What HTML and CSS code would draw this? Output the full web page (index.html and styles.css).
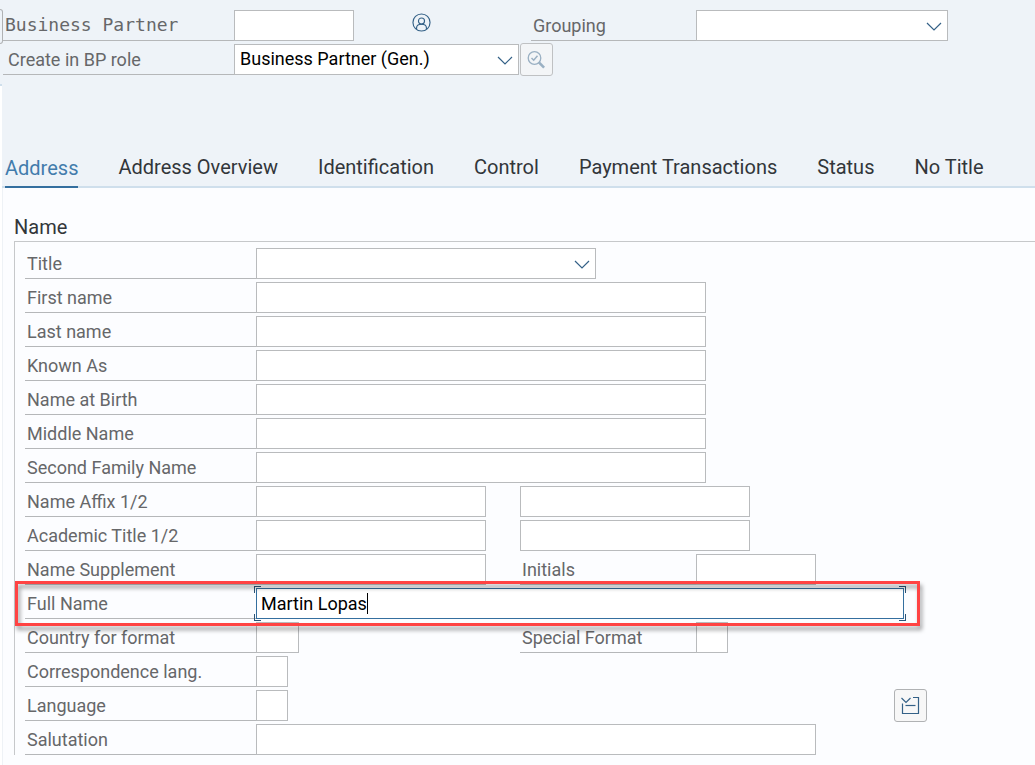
FILE: index.html
```html
<!DOCTYPE html>
<html lang="en">
<head>
<meta charset="utf-8">
<title>Business Partner</title>
<link rel="stylesheet" href="styles.css">
</head>
<body>
<svg class="defs" aria-hidden="true">
  <symbol id="chevron" viewBox="0 0 16 9"><path d="M1 1 L8 8 L15 1" fill="none" stroke="currentColor" stroke-width="1.2"/></symbol>
</svg>

<header class="header">
  <div class="header-row">
    <label class="label code-label" for="partner">Business Partner</label>
    <div class="cell partner-cell">
      <input class="field w-120" id="partner" type="text">
      <svg class="person" viewBox="0 0 20 20" fill="none" stroke="currentColor" stroke-width="1.2" role="img" aria-label="Person">
        <circle cx="10" cy="10" r="9"/>
        <circle cx="10" cy="8.5" r="3.2"/>
        <path d="M4.8 16.8 V15.9 C4.8 13.2 7 11.8 10 11.8 S15.2 13.2 15.2 15.9 V16.8"/>
      </svg>
    </div>
    <label class="label grouping-label" for="grouping">Grouping</label>
    <div class="select w-252">
      <select class="field" id="grouping"><option></option></select>
      <svg class="chevron"><use href="#chevron"/></svg>
    </div>
  </div>
  <div class="header-row">
    <label class="label role-label" for="role">Create in BP role</label>
    <div class="cell role-cell">
      <div class="select w-285">
        <select class="field" id="role"><option>Business Partner (Gen.)</option></select>
        <svg class="chevron"><use href="#chevron"/></svg>
      </div>
      <button class="icon-button muted" type="button" aria-label="Role details">
        <svg viewBox="0 0 20 20" width="20" height="20" fill="none" stroke="currentColor">
          <circle cx="7.5" cy="8" r="6.3" stroke-width="1.3"/>
          <path d="M4.5 8 L6.7 10.2 L10.5 5.8" stroke-width="1.5"/>
          <path d="M11.9 12.4 L17.1 17.6" stroke-width="2.6"/>
        </svg>
      </button>
    </div>
  </div>
</header>

<main class="main">
  <nav class="tabs">
    <a class="tab active" href="#address">Address</a>
    <a class="tab" href="#overview">Address Overview</a>
    <a class="tab" href="#identification">Identification</a>
    <a class="tab" href="#control">Control</a>
    <a class="tab" href="#payment">Payment Transactions</a>
    <a class="tab" href="#status">Status</a>
    <a class="tab" href="#notitle">No Title</a>
  </nav>

  <section class="panel" id="address">
    <h2 class="group-title">Name</h2>
    <form class="group">
      <div class="row">
        <label class="label" for="title">Title</label>
        <div class="select w-340 span">
          <select class="field" id="title"><option></option></select>
          <svg class="chevron"><use href="#chevron"/></svg>
        </div>
      </div>
      <div class="row"><label class="label" for="first">First name</label><input class="field w-450 span" id="first" type="text"></div>
      <div class="row"><label class="label" for="last">Last name</label><input class="field w-450 span" id="last" type="text"></div>
      <div class="row"><label class="label" for="known">Known As</label><input class="field w-450 span" id="known" type="text"></div>
      <div class="row"><label class="label" for="birth">Name at Birth</label><input class="field w-450 span" id="birth" type="text"></div>
      <div class="row"><label class="label" for="middle">Middle Name</label><input class="field w-450 span" id="middle" type="text"></div>
      <div class="row"><label class="label" for="second">Second Family Name</label><input class="field w-450 span" id="second" type="text"></div>
      <div class="row"><label class="label" for="affix">Name Affix 1/2</label><input class="field w-230" id="affix" type="text"><input class="field w-230 pair" type="text" aria-label="Name Affix 2"></div>
      <div class="row"><label class="label" for="academic">Academic Title 1/2</label><input class="field w-230" id="academic" type="text"><input class="field w-230 pair" type="text" aria-label="Academic Title 2"></div>
      <div class="row"><label class="label" for="supplement">Name Supplement</label><input class="field w-230" id="supplement" type="text"><label class="label" for="initials">Initials</label><input class="field w-120" id="initials" type="text"></div>
      <div class="row marked">
        <label class="label" for="full">Full Name</label>
        <div class="focus w-648 span">
          <input class="field" id="full" type="text" value="Martin Lopas">
          <span class="caret"></span>
        </div>
        <span class="marker"></span>
      </div>
      <div class="row"><label class="label" for="country">Country for format</label><input class="field w-43" id="country" type="text"><label class="label" for="special">Special Format</label><input class="field w-32" id="special" type="text"></div>
      <div class="row"><label class="label" for="corr">Correspondence lang.</label><input class="field w-32" id="corr" type="text"></div>
      <div class="row">
        <label class="label" for="language">Language</label><input class="field w-32" id="language" type="text">
        <button class="icon-button last" type="button" aria-label="Collapse">
          <svg viewBox="0 0 20 20" width="20" height="20" fill="none" stroke="currentColor" stroke-width="1.2">
            <path d="M0.5 2 L5 6.5 L9.5 2"/>
            <path d="M12 1.5 H17.5 V17.5 H1.5 V7.5"/>
            <path d="M4.5 9.5 H14.5"/>
          </svg>
        </button>
      </div>
      <div class="row"><label class="label" for="salutation">Salutation</label><input class="field w-560 span" id="salutation" type="text"></div>
    </form>
  </section>
</main>
</body>
</html>
```

FILE: styles.css
```css
* { box-sizing: border-box; }

body {
  margin: 0;
  min-height: 100vh;
  display: flex;
  flex-direction: column;
  overflow-x: hidden;
  background: #fcfdff;
  font-family: Roboto, "Liberation Sans", sans-serif;
  font-size: 18px;
  color: #32363a;
}

.defs { position: absolute; width: 0; height: 0; }

/* Header */
.header {
  position: relative;
  display: flex;
  flex-direction: column;
  gap: 3px;
  height: 86px;
  padding: 10px 0 0 3px;
  background: #eef3f8;
}

/* Edges of the neighbouring pane, cut off at the left side */
.header::before {
  content: "";
  position: absolute;
  top: 9px;
  left: 0;
  width: 2px;
  height: 33px;
  border: 1px solid #b0b2b4;
  border-left: 0;
  border-radius: 0 3px 3px 0;
}

.header::after {
  content: "";
  position: absolute;
  bottom: 0;
  left: 0;
  width: 2px;
  height: 2px;
  background: #cfdfec;
}

.header-row {
  display: grid;
  grid-template-columns: 231px 297px 165px 1fr;
  height: 31px;
}

.cell { display: flex; }
.role-cell { grid-column: 2 / -1; gap: 1px; }
.partner-cell { gap: 58px; }

.person { width: 19px; height: 19px; margin-top: 3px; color: #346187; }

/* Labels and fields */
.label {
  height: 31px;
  padding-left: 2px;
  border-bottom: 1px solid #b5b7b9;
  line-height: 31px;
  color: #666769;
  white-space: nowrap;
}

.code-label { font-family: "DejaVu Sans Mono", monospace; font-size: 18px; line-height: 29px; }
.role-label { padding-left: 5px; }

.field {
  width: 100%;
  height: 31px;
  margin: 0;
  padding: 0 5px;
  border: 1px solid #b9bbbd;
  border-radius: 0;
  background: #fff;
  font: inherit;
  color: #000;
  appearance: none;
  outline: none;
}

select.field { padding-bottom: 2px; }

.select { position: relative; }

.chevron {
  position: absolute;
  top: 12px;
  right: 6px;
  width: 16px;
  height: 9px;
  color: #346187;
  pointer-events: none;
}

.w-32 { width: 32px; }
.w-43 { width: 43px; }
.w-120 { width: 120px; }
.w-230 { width: 230px; }
.w-252 { width: 252px; }
.w-285 { width: 285px; }
.w-340 { width: 340px; }
.w-450 { width: 450px; }
.w-560 { width: 560px; }
.w-648 { width: 648px; }

.icon-button {
  display: flex;
  align-items: center;
  justify-content: center;
  width: 33px;
  height: 33px;
  margin: -1px 0;
  padding: 0;
  border: 1px solid #b0b2b4;
  border-radius: 3px;
  background: #f7f7f7;
  color: #346187;
}

.icon-button.muted { border-color: #bfc1c3; background: #f3f5f7; color: #9ab0c3; }

/* Tabs */
.main { flex: 1; display: flex; flex-direction: column; border-left: 2px solid #fff; }

.tabs {
  display: flex;
  align-items: flex-end;
  gap: 40px;
  height: 102px;
  padding-left: 3px;
  border-bottom: 2px solid #cfdfec;
  background: #eef3f8;
}

.tab {
  height: 36px;
  margin-bottom: -2px;
  border-bottom: 2px solid transparent;
  font-size: 20px;
  line-height: 30px;
  color: #32363a;
  text-decoration: none;
  white-space: nowrap;
}

.tab.active { border-color: #346f9f; line-height: 32px; color: #427cac; }

/* Name group */
.panel {
  flex: 1;
  padding: 26px 0 10px 11px;
  border-left: 1px solid #eef2f6;
}

.group-title {
  margin: 0;
  font-size: 20px;
  font-weight: 400;
  line-height: 27px;
}

.group {
  display: flex;
  flex-direction: column;
  gap: 3px;
  padding: 6px 0 0 10px;
  border: solid #c6c8ca;
  border-width: 1px 0 0 1px;
}

.row {
  position: relative;
  display: grid;
  grid-template-columns: 231px 264px 176px 198px 1fr;
  height: 31px;
}

.span { grid-column: 2 / -1; }
.pair { grid-column: 3 / -1; }
.last { grid-column: 5; }

/* Focused field with corner brackets */
.focus { position: relative; }
.focus .field { padding: 0 4px; border-color: #346f9f; }

.focus::after {
  content: "";
  position: absolute;
  inset: -2px;
  pointer-events: none;
  background:
    linear-gradient(#2c5577 0 0) left top / 7px 1px,
    linear-gradient(#2c5577 0 0) left top / 1px 7px,
    linear-gradient(#2c5577 0 0) right top / 7px 1px,
    linear-gradient(#2c5577 0 0) right top / 1px 7px,
    linear-gradient(#2c5577 0 0) left bottom / 7px 1px,
    linear-gradient(#2c5577 0 0) left bottom / 1px 7px,
    linear-gradient(#2c5577 0 0) right bottom / 7px 1px,
    linear-gradient(#2c5577 0 0) right bottom / 1px 7px;
  background-repeat: no-repeat;
}

.caret {
  position: absolute;
  top: 5px;
  left: 111px;
  width: 1px;
  height: 21px;
  background: #000;
}

.marked { z-index: 1; }

.marker {
  position: absolute;
  top: -7px;
  left: -10px;
  width: 905px;
  height: 45px;
  border: 3px solid #ff4343;
  filter: drop-shadow(2px 4px 2px rgba(0, 0, 0, 0.4));
  pointer-events: none;
}
```
